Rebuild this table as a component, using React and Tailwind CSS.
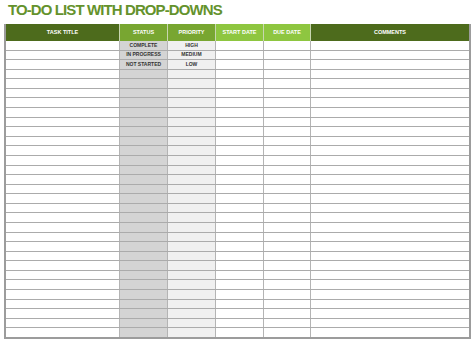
const columns = [
  { title: 'TASK TITLE', width: 'w-[114px]', head: 'bg-[#4d6b1c]', body: 'bg-white' },
  { title: 'STATUS', width: 'w-[48px]', head: 'bg-[#78a631]', body: 'bg-[#d4d4d4]' },
  { title: 'PRIORITY', width: 'w-[48px]', head: 'bg-[#78a631]', body: 'bg-[#f0f0f0]' },
  { title: 'START DATE', width: 'w-[48px]', head: 'bg-[#8ec640]', body: 'bg-white' },
  { title: 'DUE DATE', width: 'w-[47px]', head: 'bg-[#8ec640]', body: 'bg-white' },
  { title: 'COMMENTS', width: 'flex-1', head: 'bg-[#4d6b1c]', body: 'bg-white' },
];

const filled = [
  ['', 'COMPLETE', 'HIGH', '', '', ''],
  ['', 'IN PROGRESS', 'MEDIUM', '', '', ''],
  ['', 'NOT STARTED', 'LOW', '', '', ''],
];

const rows = Array.from({ length: 31 }, (_, i) => filled[i] || ['', '', '', '', '', '']);

export default function App() {
  return (
    <div className="w-[474px] h-[344px] bg-white font-['Liberation_Sans',Arial,sans-serif] overflow-hidden">
      {/* Title */}
      <div className="h-[24px] pl-[8px] pt-[1px]">
        <h1 className="text-[15px] leading-[18px] font-bold tracking-[-0.9px] text-[#64922c]">
          TO-DO LIST WITH DROP-DOWNS
        </h1>
      </div>

      {/* Sheet */}
      <div className="ml-[4px] w-[467px] border-l-2 border-r-2 border-b-2 border-[#9c9c9c]">
        <div className="flex h-[17px]">
          {columns.map((c, i) => (
            <div
              key={c.title}
              className={`${c.width} ${c.head} flex items-center justify-center text-white text-[5.5px] font-bold ${i < columns.length - 1 ? 'border-r border-[#c8d6b0]' : ''}`}
            >
              {c.title}
            </div>
          ))}
        </div>

        <div className="flex flex-col h-[296px]">
          {rows.map((row, r) => (
            <div key={r} className={`flex flex-1 ${r < rows.length - 1 ? 'border-b border-[#ababab]' : ''}`}>
              {columns.map((c, i) => (
                <div
                  key={i}
                  className={`${c.width} ${c.body} flex items-center justify-center text-[5px] font-bold text-[#333] ${i < columns.length - 1 ? 'border-r border-[#b4b4b4]' : ''}`}
                >
                  {row[i]}
                </div>
              ))}
            </div>
          ))}
        </div>
      </div>
    </div>
  );
}
